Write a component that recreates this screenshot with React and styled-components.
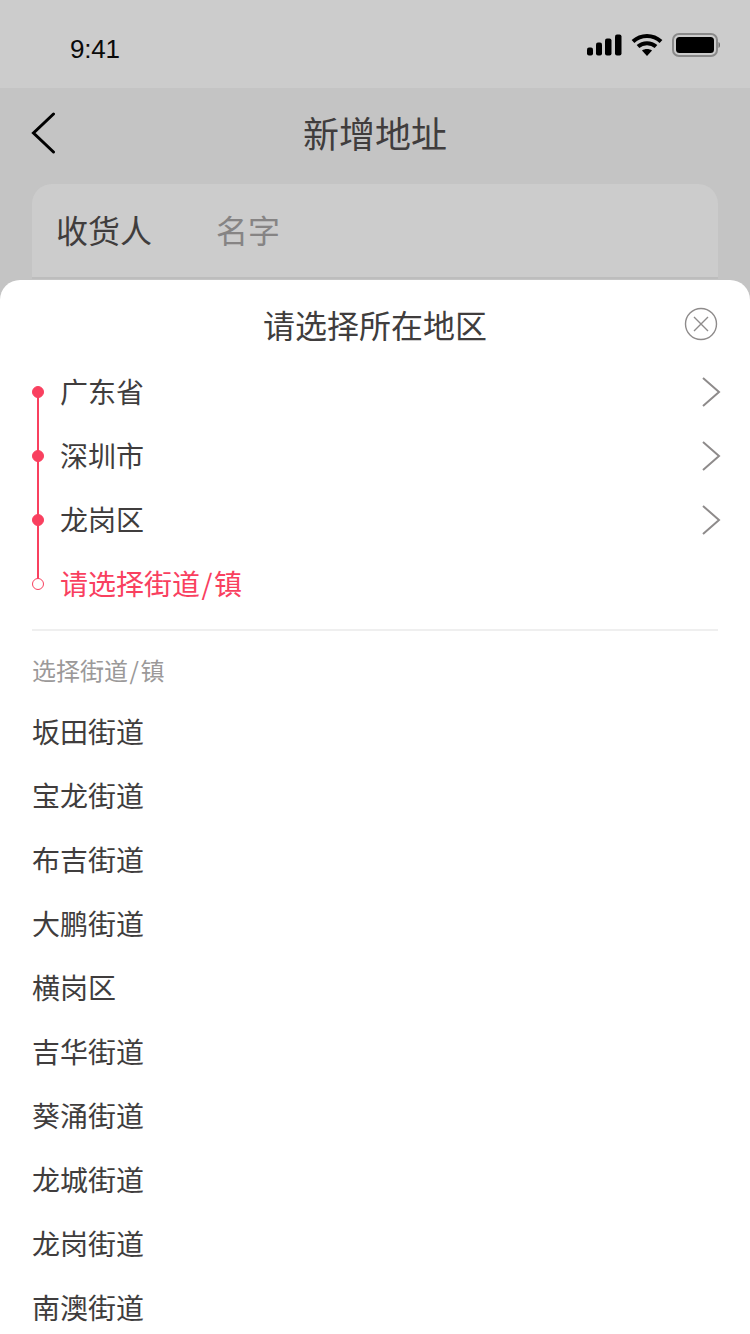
import styled, { createGlobalStyle } from "styled-components"

const GlobalStyle = createGlobalStyle`
    html, body {
        margin: 0;
        padding: 0;
        background: #c4c4c4;
    }
    body {
        font-family: "Noto Sans CJK SC", "Liberation Sans", sans-serif;
    }
`

const Page = styled.div`
    position: relative;
    width: 750px;
    height: 1334px;
    overflow: hidden;
    background: #c4c4c4;
    color: #403d3d;
`

const StatusBar = styled.div`
    height: 88px;
    box-sizing: border-box;
    display: flex;
    align-items: center;
    justify-content: space-between;
    padding: 10px 29px 0 70px;
    background: #cccccc;
`

const Time = styled.span`
    font-family: "Liberation Sans", sans-serif;
    font-size: 26px;
    color: #0a0a0a;
    letter-spacing: -0.2px;
`

const StatusIcons = styled.div`
    display: flex;
    align-items: center;
    margin-top: -8px;
`

const NavBar = styled.div`
    position: relative;
    height: 96px;
    box-sizing: border-box;
    padding-bottom: 8px;
    display: flex;
    align-items: center;
    justify-content: center;
`

const BackButton = styled.div`
    position: absolute;
    left: 31px;
    top: 24px;
    display: flex;
`

const NavTitle = styled.h1`
    margin: 0;
    font-size: 36px;
    font-weight: 400;
    line-height: 88px;
    color: #403d3d;
`

const FormCard = styled.div`
    margin: 0 32px;
    height: 95px;
    box-sizing: border-box;
    display: flex;
    align-items: center;
    padding: 0 24px 3px;
    background: #cccccc;
    border-radius: 20px 20px 0 0;
    border-bottom: 2px solid #bdbdbd;
`

const FieldLabel = styled.span`
    width: 160px;
    font-size: 32px;
    font-weight: 400;
    color: #403d3d;
`

const FieldHint = styled.span`
    font-size: 32px;
    font-weight: 400;
    color: #868484;
`

const Sheet = styled.div`
    position: absolute;
    left: 0;
    right: 0;
    top: 280px;
    bottom: 0;
    background: #ffffff;
    border-radius: 20px 20px 0 0;
    overflow: hidden;
`

const SheetHeader = styled.div`
    position: relative;
    height: 80px;
    display: flex;
    align-items: center;
    justify-content: center;
    padding-top: 7px;
    box-sizing: border-box;
`

const SheetTitle = styled.h2`
    margin: 0;
    font-size: 32px;
    font-weight: 400;
    color: #403d3d;
`

const CloseButton = styled.div`
    position: absolute;
    right: 32px;
    top: 27px;
    display: flex;
`

const Steps = styled.div`
    margin: 0 32px;
    padding-bottom: 13px;
    border-bottom: 2px solid #efefef;
`

const Step = styled.div`
    position: relative;
    height: 64px;
    box-sizing: border-box;
    padding: 0 0 2px 28px;
    display: flex;
    align-items: center;
    justify-content: space-between;
    font-size: 28px;
    font-weight: 400;
    color: ${(p) => (p.$active ? "#f9405f" : "#403d3d")};

    &::before {
        content: "";
        position: absolute;
        left: 0;
        top: 26px;
        width: 12px;
        height: 12px;
        box-sizing: border-box;
        border-radius: 50%;
        background: ${(p) => (p.$active ? "#ffffff" : "#f9405f")};
        border: 1px solid #f9405f;
        z-index: 1;
    }

    &::after {
        content: "";
        display: ${(p) => (p.$active ? "none" : "block")};
        position: absolute;
        left: 5px;
        top: 32px;
        width: 2px;
        height: 64px;
        background: #f9405f;
    }
`

const Chevron = styled.div`
    display: flex;
    margin: 2px -3px 0 0;
`

const Slash = styled.span`
    margin: 0 1.5px;
`

const ListHeading = styled.div`
    margin: 21px 32px 0;
    height: 36px;
    line-height: 36px;
    font-size: 24px;
    font-weight: 400;
    color: #9b9999;
`

const AreaList = styled.div`
    margin: 11px 32px 0;
`

const AreaItem = styled.div`
    height: 64px;
    line-height: 64px;
    font-size: 28px;
    font-weight: 400;
    color: #403d3d;
`

const steps = ["广东省", "深圳市", "龙岗区"]
const areas = ["坂田街道", "宝龙街道", "布吉街道", "大鹏街道", "横岗区", "吉华街道", "葵涌街道", "龙城街道", "龙岗街道", "南澳街道"]

const ChevronIcon = () => (
    <svg width="20" height="30" viewBox="0 0 20 30" fill="none" stroke="#8e8b8b" strokeWidth="2">
        <path d="M2 1l16 14L2 29" />
    </svg>
)

const App = () => {
    return (
        <Page>
            <GlobalStyle />
            <StatusBar>
                <Time>9:41</Time>
                <StatusIcons>
                    <svg width="134" height="24" viewBox="0 0 134 24" fill="#000">
                        <rect x="0" y="14.500" width="6" height="8" rx="2" />
                        <rect x="9" y="9.500" width="6" height="13" rx="2" />
                        <rect x="18" y="5.500" width="6.500" height="17" rx="2" />
                        <rect x="28" y="1.500" width="6.500" height="21" rx="2" />
                        <path d="M46 8.500c8-7.500 20-7.500 28 0" fill="none" stroke="#000" strokeWidth="4" />
                        <path d="M51 13.500c5-4.500 13-4.500 18 0" fill="none" stroke="#000" strokeWidth="4" />
                        <path d="M55 17.500c2.500-2 7.500-2 10 0L60 23z" />
                        <rect x="86" y="1" width="44" height="22" rx="6" fill="none" stroke="#8a8a8a" strokeWidth="2" />
                        <rect x="89" y="4" width="38" height="16" rx="3.500" />
                        <path d="M131.500 9c2 .5 2 5.500 0 6z" fill="#6e6e6e" />
                    </svg>
                </StatusIcons>
            </StatusBar>
            <NavBar>
                <BackButton>
                    <svg width="26" height="42" viewBox="0 0 26 42" fill="none" stroke="#000" strokeWidth="3" strokeLinecap="round">
                        <path d="M22.500 2L2.500 21l20 19" />
                    </svg>
                </BackButton>
                <NavTitle>新增地址</NavTitle>
            </NavBar>
            <FormCard>
                <FieldLabel>收货人</FieldLabel>
                <FieldHint>名字</FieldHint>
            </FormCard>
            <Sheet>
                <SheetHeader>
                    <SheetTitle>请选择所在地区</SheetTitle>
                    <CloseButton>
                        <svg width="34" height="34" viewBox="0 0 34 34" fill="none" stroke="#8e8b8b" strokeWidth="1.4">
                            <circle cx="17" cy="17" r="15.500" />
                            <path d="M10 10l14 14M24 10L10 24" />
                        </svg>
                    </CloseButton>
                </SheetHeader>
                <Steps>
                    {steps.map((name) => (
                        <Step key={name}>
                            {name}
                            <Chevron><ChevronIcon /></Chevron>
                        </Step>
                    ))}
                    <Step $active><span>请选择街道<Slash>/</Slash>镇</span></Step>
                </Steps>
                <ListHeading>选择街道<Slash>/</Slash>镇</ListHeading>
                <AreaList>
                    {areas.map((name) => (
                        <AreaItem key={name}>{name}</AreaItem>
                    ))}
                </AreaList>
            </Sheet>
        </Page>
    )
}

export default App
